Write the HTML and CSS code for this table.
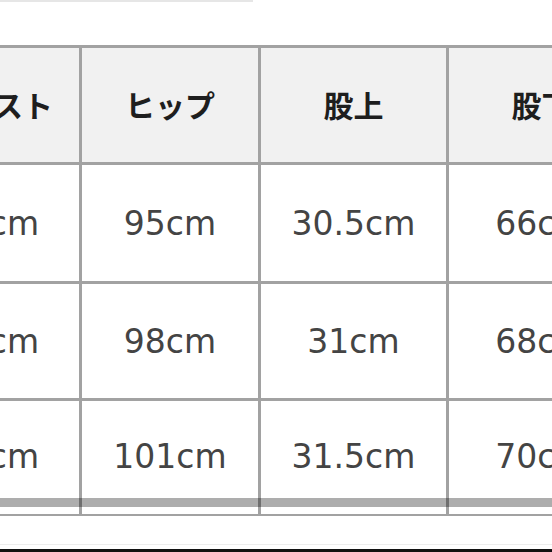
FILE: index.html
```html
<!DOCTYPE html>
<html lang="ja">
<head>
<meta charset="utf-8">
<title>サイズ表</title>
<link rel="stylesheet" href="styles.css">
</head>
<body>
<div class="page">
  <div class="top-box"></div>
  <div class="table-wrap">
    <div class="size-table">
      <div class="cell head first">ウエスト</div>
      <div class="cell head">ヒップ</div>
      <div class="cell head">股上</div>
      <div class="cell head">股下</div>

      <div class="cell row1 first">70cm</div>
      <div class="cell row1">95cm</div>
      <div class="cell row1">30.5cm</div>
      <div class="cell row1">66cm</div>

      <div class="cell row2 first">73cm</div>
      <div class="cell row2">98cm</div>
      <div class="cell row2">31cm</div>
      <div class="cell row2">68cm</div>

      <div class="cell row3 first">76cm</div>
      <div class="cell row3">101cm</div>
      <div class="cell row3">31.5cm</div>
      <div class="cell row3">70cm</div>
    </div>
    <div class="scrollbar"></div>
  </div>
  <div class="footer-line"></div>
</div>
</body>
</html>
```

FILE: styles.css
```css
html, body {
  margin: 0;
  padding: 0;
  background: #ffffff;
}

body {
  width: 552px;
  height: 552px;
  overflow: hidden;
}

.page {
  position: relative;
  width: 552px;
  height: 552px;
  overflow: hidden;
  display: flex;
  flex-direction: column;
}

.top-box {
  width: 253px;
  height: 2px;
  background: #e6e6e6;
}

.table-wrap {
  position: relative;
  margin-top: 43px;
  margin-left: -109px;
  width: 746px;
}

.size-table {
  display: grid;
  grid-template-columns: 188px 179px 188px 188px;
  grid-template-rows: 117px 119px 117px 115px;
  border-top: 3px solid #a2a2a2;
  border-left: 3px solid #a2a2a2;
  width: max-content;
}

.cell {
  box-sizing: border-box;
  border-right: 3px solid #a2a2a2;
  border-bottom: 3px solid #a2a2a2;
  display: flex;
  align-items: center;
  justify-content: center;
  font-family: "DejaVu Sans", "Noto Sans CJK JP", sans-serif;
  font-size: 33px;
  color: #444444;
  background: #ffffff;
}

.cell.first {
  padding-left: 13px;
}

.cell.head {
  background: #f1f1f1;
  font-family: "Noto Sans CJK JP", sans-serif;
  font-weight: 700;
  font-size: 30px;
  color: #1e1e1e;
  padding-bottom: 2px;
}

.cell.row3 {
  border-bottom-width: 2px;
  padding-bottom: 3px;
}

.scrollbar {
  position: absolute;
  left: 109px;
  right: 0;
  top: 453px;
  height: 9px;
  background: rgba(0, 0, 0, 0.32);
}

.footer-line {
  margin-top: 28px;
  height: 1px;
  background: #ededed;
}

.footer-line::after {
  content: "";
  display: block;
  margin-top: 5px;
  height: 3px;
  background: #111111;
}
```
